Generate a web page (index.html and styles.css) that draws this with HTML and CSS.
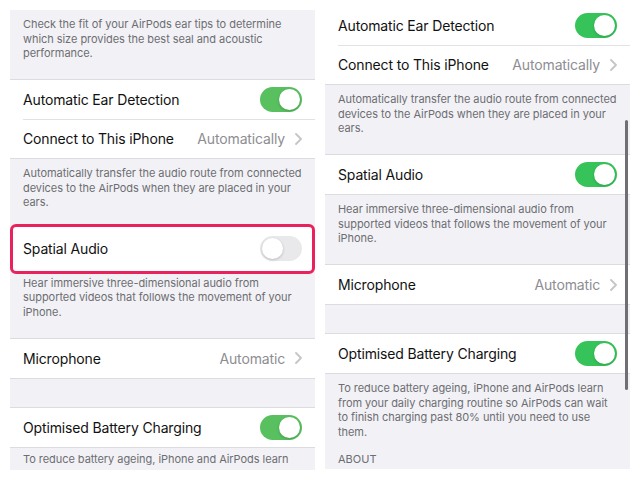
FILE: index.html
```html
<!DOCTYPE html>
<html lang="en">
<head>
    <meta charset="UTF-8">
    <meta name="viewport" content="width=device-width, initial-scale=1.0">
    <title>AirPods Settings</title>
    <link rel="stylesheet" href="styles.css">
</head>
<body>
    <div class="screen">
        <section class="panel panel-left">
            <p class="note">Check the fit of your AirPods ear tips to determine which size provides the best seal and acoustic performance.</p>
            <div class="group">
                <div class="row">
                    <span class="label">Automatic Ear Detection</span>
                    <span class="switch on"></span>
                </div>
                <div class="row">
                    <span class="label">Connect to This iPhone</span>
                    <span class="value">Automatically</span>
                    <svg class="chevron" width="7" height="12" viewBox="0 0 7 12"><polyline points="1,1 6,6 1,11"/></svg>
                </div>
            </div>
            <p class="note note-before-mark">Automatically transfer the audio route from connected devices to the AirPods when they are placed in your ears.</p>
            <div class="row marked">
                <span class="label">Spatial Audio</span>
                <span class="switch"></span>
            </div>
            <p class="note note-after-mark">Hear immersive three-dimensional audio from supported videos that follows the movement of your iPhone.</p>
            <div class="group">
                <div class="row">
                    <span class="label">Microphone</span>
                    <span class="value">Automatic</span>
                    <svg class="chevron" width="7" height="12" viewBox="0 0 7 12"><polyline points="1,1 6,6 1,11"/></svg>
                </div>
            </div>
            <div class="gap"></div>
            <div class="group">
                <div class="row">
                    <span class="label">Optimised Battery Charging</span>
                    <span class="switch on"></span>
                </div>
            </div>
            <p class="note note-tight">To reduce battery ageing, iPhone and AirPods learn</p>
        </section>

        <section class="panel panel-right">
            <div class="group cut">
                <div class="row">
                    <span class="label">Automatic Ear Detection</span>
                    <span class="switch on"></span>
                </div>
                <div class="row">
                    <span class="label">Connect to This iPhone</span>
                    <span class="value">Automatically</span>
                    <svg class="chevron" width="7" height="12" viewBox="0 0 7 12"><polyline points="1,1 6,6 1,11"/></svg>
                </div>
            </div>
            <p class="note">Automatically transfer the audio route from connected devices to the AirPods when they are placed in your ears.</p>
            <div class="group">
                <div class="row">
                    <span class="label">Spatial Audio</span>
                    <span class="switch on"></span>
                </div>
            </div>
            <p class="note">Hear immersive three-dimensional audio from supported videos that follows the movement of your iPhone.</p>
            <div class="group">
                <div class="row">
                    <span class="label">Microphone</span>
                    <span class="value">Automatic</span>
                    <svg class="chevron" width="7" height="12" viewBox="0 0 7 12"><polyline points="1,1 6,6 1,11"/></svg>
                </div>
            </div>
            <div class="gap"></div>
            <div class="group">
                <div class="row">
                    <span class="label">Optimised Battery Charging</span>
                    <span class="switch on"></span>
                </div>
            </div>
            <p class="note note-end">To reduce battery ageing, iPhone and AirPods learn from your daily charging routine so AirPods can wait to finish charging past 80% until you need to use them.</p>
            <p class="header">ABOUT</p>
            <div class="scrollbar"></div>
        </section>
    </div>
</body>
</html>
```

FILE: styles.css
```css
html, body{
    margin : 0;
    padding : 0;
    background : #fff;
}
.screen{
    display : flex;
    gap : 10px;
    padding : 0 10px;
    font-family: 'Inter', 'Noto Sans', sans-serif;
}
.panel{
    width : 305px;
    background : #f2f2f6;
    overflow : hidden;
    position : relative;
}
.panel-left{
    margin-top : 10px;
    height : 460px;
}
.panel-right{
    margin-top : 6px;
    height : 463px;
}

/* grey footer text */
.note{
    margin : 0;
    padding : 7px 13px 18.5px;
    font-size : 11px;
    letter-spacing : -0.05px;
    line-height : 14.5px;
    color : #6d6d72;
}
.note-before-mark{
    padding-bottom : 14px;
}
.note-after-mark{
    padding-top : 2px;
}
.note-tight{
    padding-top : 4px;
}
.note-end{
    padding-bottom : 13px;
}
.header{
    margin : 0;
    padding : 0 13px;
    font-size : 11px;
    line-height : 14.5px;
    color : #6d6d72;
}
.gap{
    height : 28px;
}

/* white cells */
.group{
    background : #fff;
    border-top : 1px solid #dcdce0;
    border-bottom : 1px solid #dcdce0;
}
.group.cut{
    border-top : 0;
}
.row{
    display : flex;
    align-items : center;
    height : 39px;
    padding : 0 13px;
    background : #fff;
}
.row + .row{
    background : linear-gradient(#e2e2e6, #e2e2e6) 13px 0 / calc(100% - 13px) 1px no-repeat #fff;
}
.row.marked{
    box-sizing : border-box;
    height : 50px;
    padding : 0 10px;
    border : 3px solid #e9225d;
    border-radius : 6px;
}
.label{
    flex : 1;
    font-size : 14px;
    letter-spacing : -0.15px;
    color : #111;
}
.value{
    font-size : 14px;
    letter-spacing : -0.15px;
    color : #8d8d92;
    margin-right : 10px;
}
.chevron polyline{
    fill : none;
    stroke : #c5c5ca;
    stroke-width : 1.8;
    stroke-linecap : round;
    stroke-linejoin : round;
}

/* toggle */
.switch{
    width : 42px;
    height : 25px;
    border-radius : 13px;
    background : #e9e9eb;
    position : relative;
    flex : none;
}
.switch::after{
    content : "";
    position : absolute;
    top : 2px;
    left : 2px;
    width : 21px;
    height : 21px;
    border-radius : 50%;
    background : #fff;
    box-shadow : 0 1px 3px rgba(0,0,0,0.2);
}
.switch.on{
    background : #58c05f;
}
.switch.on::after{
    left : 19px;
}
.panel-right .switch.on{
    background : #36c45a;
}

.scrollbar{
    position : absolute;
    right : 2px;
    top : 114px;
    width : 3px;
    height : 270px;
    border-radius : 2px;
    background : #707074;
}
```
